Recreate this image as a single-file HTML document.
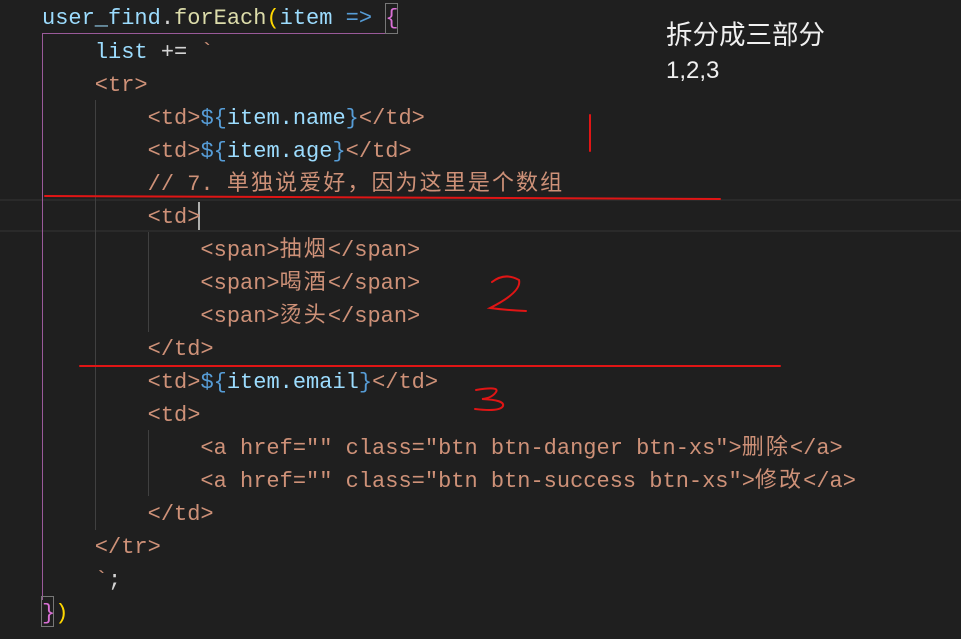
<!DOCTYPE html>
<html><head><meta charset="utf-8"><style>
html,body{margin:0;padding:0;background:#1f1f1f;width:961px;height:639px;overflow:hidden;position:relative}
.l{position:absolute;left:42px;height:33px;line-height:33px;white-space:pre;font-family:"Liberation Mono","Noto Sans CJK SC",monospace;font-size:22px;color:#ce9178}
.c{letter-spacing:2.1px}
.v{color:#9cdcfe}.k{color:#569cd6}.f{color:#dcdcaa}.y{color:#ffd700}.p{color:#da70d6}.w{color:#d4d4d4}
.g{position:absolute;width:1px;background:#404040}
</style></head><body>
<div style="position:absolute;left:0;top:199px;width:961px;height:2px;background:#2a2a2a"></div>
<div style="position:absolute;left:0;top:230px;width:961px;height:2px;background:#2a2a2a"></div>
<div style="position:absolute;left:42px;top:33px;width:356px;height:1px;background:#9a5a9a"></div>
<div style="position:absolute;left:42px;top:33px;width:1px;height:567px;background:#9a5a9a"></div>
<div class="g" style="left:95px;top:100px;height:430px"></div>
<div class="g" style="left:148px;top:232px;height:100px"></div>
<div class="g" style="left:148px;top:430px;height:66px"></div>
<div style="position:absolute;left:385px;top:3px;width:11px;height:29px;border:1px solid #777"></div>
<div style="position:absolute;left:198px;top:202px;width:2px;height:28px;background:#aeafad"></div>
<div style="position:absolute;left:41px;top:596px;width:11px;height:29px;border:1px solid #777"></div>

<div class="l" style="top:2px"><span class="v">user_find</span><span class="w">.</span><span class="f">forEach</span><span class="y">(</span><span class="v">item</span> <span class="k">=&gt;</span> <span class="p">{</span></div>
<div class="l" style="top:36px">    <span class="v">list</span> <span class="w">+=</span> `</div>
<div class="l" style="top:69px">    &lt;tr&gt;</div>
<div class="l" style="top:102px">        &lt;td&gt;<span class="k">${</span><span class="v">item.name</span><span class="k">}</span>&lt;/td&gt;</div>
<div class="l" style="top:135px">        &lt;td&gt;<span class="k">${</span><span class="v">item.age</span><span class="k">}</span>&lt;/td&gt;</div>
<div class="l" style="top:168px">        // 7. <span class="c">单独说爱好，因为这里是个数组</span></div>
<div class="l" style="top:201px">        &lt;td&gt;</div>
<div class="l" style="top:234px">            &lt;span&gt;<span class="c">抽烟</span>&lt;/span&gt;</div>
<div class="l" style="top:267px">            &lt;span&gt;<span class="c">喝酒</span>&lt;/span&gt;</div>
<div class="l" style="top:300px">            &lt;span&gt;<span class="c">烫头</span>&lt;/span&gt;</div>
<div class="l" style="top:333px">        &lt;/td&gt;</div>
<div class="l" style="top:366px">        &lt;td&gt;<span class="k">${</span><span class="v">item.email</span><span class="k">}</span>&lt;/td&gt;</div>
<div class="l" style="top:399px">        &lt;td&gt;</div>
<div class="l" style="top:432px">            &lt;a href="" class="btn btn-danger btn-xs"&gt;<span class="c">删除</span>&lt;/a&gt;</div>
<div class="l" style="top:465px">            &lt;a href="" class="btn btn-success btn-xs"&gt;<span class="c">修改</span>&lt;/a&gt;</div>
<div class="l" style="top:498px">        &lt;/td&gt;</div>
<div class="l" style="top:531px">    &lt;/tr&gt;</div>
<div class="l" style="top:564px">    `<span class="w">;</span></div>
<div class="l" style="top:597px"><span class="p">}</span><span class="y">)</span></div>

<div style="position:absolute;left:666px;top:15px;font-family:'Noto Sans CJK SC',sans-serif;font-size:26.5px;line-height:36px;color:#f0f0f0">拆分成三部分</div>
<div style="position:absolute;left:666px;top:55px;font-family:'Liberation Sans',sans-serif;font-size:24px;line-height:32px;color:#f0f0f0">1,2,3</div>

<svg style="position:absolute;left:0;top:0" width="961" height="639">
<g stroke="#e01515" stroke-width="2" fill="none" stroke-linecap="round">
<path d="M45 196 L720 199"/>
<path d="M590 115 L590 151"/>
<path d="M492 282 Q505 272 519 280 Q522 292 490 308 Q505 310 526 311"/>
<path d="M80 366 L780 366"/>
<path d="M476 390 Q500 386 496 392 Q492 398 482 399 Q505 400 503 406 Q500 412 475 409"/>
</g></svg>
</body></html>
